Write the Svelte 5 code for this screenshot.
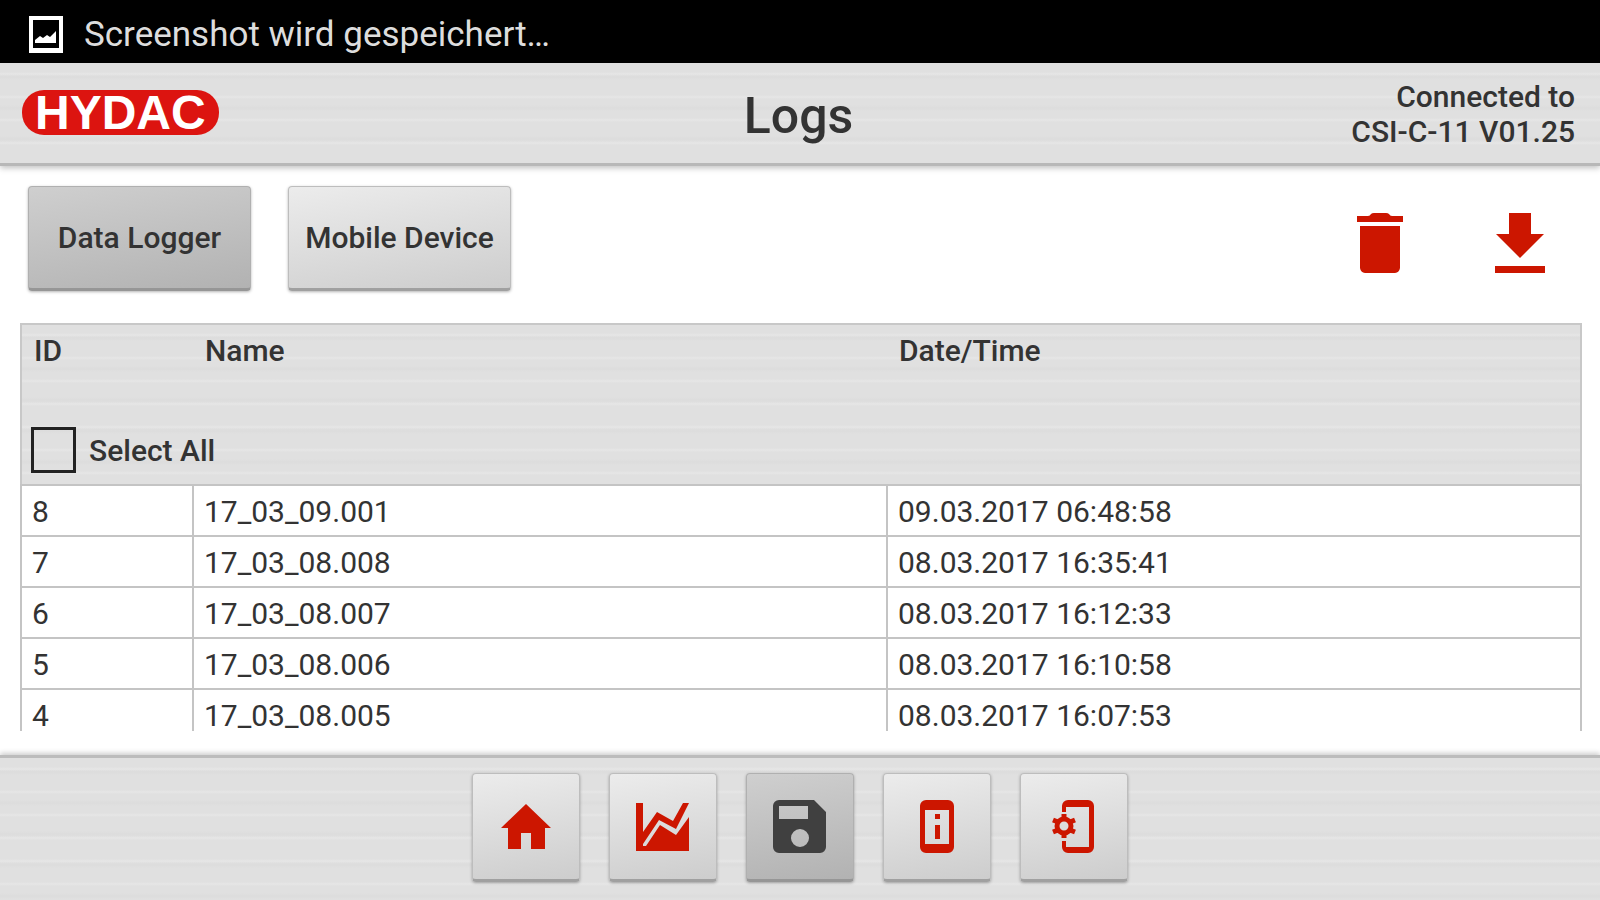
<script>
  let selectAll = $state(false);
  let source = $state('logger');
  let page = $state('logs');

  const logs = [
    { id: 8, name: '17_03_09.001', date: '09.03.2017 06:48:58' },
    { id: 7, name: '17_03_08.008', date: '08.03.2017 16:35:41' },
    { id: 6, name: '17_03_08.007', date: '08.03.2017 16:12:33' },
    { id: 5, name: '17_03_08.006', date: '08.03.2017 16:10:58' },
    { id: 4, name: '17_03_08.005', date: '08.03.2017 16:07:53' }
  ];

  const nav = [
    { id: 'home', label: 'Home', path: 'M32 9 57 33H51V54H37V38H27V54H14V33H7Z' },
    {
      id: 'chart',
      label: 'Chart',
      path: 'M5 8H12V37L26 17 42 26 52 8H58L45 34 28 25 12 49V51H15L29 30 45 40 58 22V56H5Z'
    },
    {
      id: 'logs',
      label: 'Logs',
      path: 'M11 5H46L58 17V52A6 6 0 0 1 52 58H11A6 6 0 0 1 5 52V11A6 6 0 0 1 11 5ZM11 11V24H40V11ZM32 34A9 9 0 1 0 32 52 9 9 0 1 0 32 34Z'
    },
    {
      id: 'info',
      label: 'Device info',
      path: 'M21 5H43A6 6 0 0 1 49 11V52A6 6 0 0 1 43 58H21A6 6 0 0 1 15 52V11A6 6 0 0 1 21 5ZM20 15V49H44V15ZM30 19H35V24H30ZM30 30H35V44H30Z'
    },
    {
      id: 'settings',
      label: 'Device settings',
      path: 'M20 17V11A6 6 0 0 1 26 5H46A6 6 0 0 1 52 11V52A6 6 0 0 1 46 58H26A6 6 0 0 1 20 52V46H24V52H47V12H24V17Z'
    }
  ];
</script>

<div class="app">
  <div class="status">
    <svg width="36" height="40" viewBox="0 0 36 40" aria-hidden="true">
      <path fill="#fff" fill-rule="evenodd" d="M1 1H35V38H1ZM5 5V33H31V5Z" />
      <path fill="#fff" d="M7 28V25L12 21 15 23 19 20 22 22 28 16V28Z" />
    </svg>
    <span>Screenshot wird gespeichert…</span>
  </div>

  <header class="brushed">
    <div class="logo">HYDAC</div>
    <h1>Logs</h1>
    <p class="connection">Connected to<br />CSI-C-11 V01.25</p>
  </header>

  <main>
    <div class="toolbar">
      <button class="btn tab" class:active={source === 'logger'} onclick={() => (source = 'logger')}>Data Logger</button>
      <button class="btn tab" class:active={source === 'mobile'} onclick={() => (source = 'mobile')}>Mobile Device</button>
      <div class="actions">
        <button class="action" aria-label="Delete">
          <svg width="64" height="64" viewBox="0 0 64 64">
            <path d="M9 5H20Q22 5 23 3 24 2 26 2H38Q40 2 41 3 42 5 44 5H55V11H9ZM12 15H52V57A6 6 0 0 1 47 62H17A6 6 0 0 1 12 57Z" />
          </svg>
        </button>
        <button class="action" aria-label="Download">
          <svg width="64" height="64" viewBox="0 0 64 64">
            <path d="M21 2H43V23H56L32 47 8 23H21ZM7 55H57V62H7Z" />
          </svg>
        </button>
      </div>
    </div>

    <div class="list">
      <table>
        <thead class="brushed">
          <tr>
            <th class="col-id">ID</th>
            <th class="col-name">Name</th>
            <th>Date/Time</th>
          </tr>
          <tr>
            <td class="select" colspan="3">
              <label><input type="checkbox" bind:checked={selectAll} />Select All</label>
            </td>
          </tr>
        </thead>
        <tbody>
          {#each logs as log}
            <tr>
              <td>{log.id}</td>
              <td>{log.name}</td>
              <td>{log.date}</td>
            </tr>
          {/each}
        </tbody>
      </table>
    </div>
  </main>

  <nav class="brushed">
    {#each nav as item}
      <button class="btn tile" class:active={page === item.id} aria-label={item.label} onclick={() => (page = item.id)}>
        <svg width="64" height="64" viewBox="0 0 64 64">
          <path fill-rule="evenodd" d={item.path} />
          {#if item.id === 'settings'}
            <circle class="gear" cx="22" cy="31" r="7" />
            <path class="gear" d="M22 24V19M22 38V43M16 27 11 25M16 35 11 37M28 27 33 25M28 35 33 37" />
          {/if}
        </svg>
      </button>
    {/each}
  </nav>
</div>

<style>
  :global(body) {
    margin: 0;
    background: #fff;
  }

  .app {
    display: flex;
    flex-direction: column;
    height: 100vh;
    overflow: hidden;
    color: #333;
    font-family: Roboto, sans-serif;
    font-size: 30px;
  }

  .brushed {
    background:
      repeating-linear-gradient(rgba(255, 255, 255, 0) 0 9px, rgba(255, 255, 255, 0.2) 11px, rgba(255, 255, 255, 0) 13px 23px),
      repeating-linear-gradient(rgba(0, 0, 0, 0) 0 11px, rgba(0, 0, 0, 0.015) 14px, rgba(0, 0, 0, 0) 17px 31px),
      #e0e0e0;
  }

  .status {
    flex: none;
    display: flex;
    align-items: center;
    gap: 20px;
    height: 63px;
    padding: 6px 28px 0;
    box-sizing: border-box;
    background: #000;
    color: #ddd;
    font-size: 35px;
  }

  header {
    flex: none;
    display: grid;
    grid-template-columns: 1fr auto 1fr;
    align-items: center;
    height: 103px;
    padding: 2px 25px 0 22px;
    border-bottom: 3px solid #b8b8b8;
    box-sizing: border-box;
    box-shadow: 0 2px 6px rgba(0, 0, 0, 0.25);
  }

  .logo {
    justify-self: start;
    padding: 0 13px;
    margin-bottom: 4px;
    border-radius: 22px;
    background: #dc1410;
    color: #fff;
    font: bold 48px/45px "Liberation Sans", sans-serif;
  }

  h1 {
    margin: 4px 0 0;
    font-size: 50px;
    font-weight: 500;
  }

  .connection {
    margin: 0;
    text-align: right;
    font-weight: 500;
    line-height: 35px;
  }

  main {
    flex: 1;
    min-height: 0;
    display: flex;
    flex-direction: column;
    padding: 20px 18px 24px 20px;
  }

  .toolbar {
    display: flex;
    align-items: center;
    gap: 37px;
    padding: 0 30px 32px 8px;
  }

  .btn {
    border: 1px solid #bdbdbd;
    border-bottom: 3px solid #a0a0a0;
    border-radius: 4px;
    padding: 0;
    background: linear-gradient(170deg, #ececec, #cdcdcd);
    color: #333;
    box-shadow: 0 1px 3px rgba(0, 0, 0, 0.3);
    font: 500 30px Roboto, sans-serif;
    cursor: pointer;
  }

  .btn.active {
    border-color: #b0b0b0;
    border-bottom-color: #969696;
    background: linear-gradient(170deg, #cfcfcf, #b2b2b2);
  }

  .tab {
    width: 223px;
    height: 105px;
  }

  .actions {
    display: flex;
    gap: 76px;
    margin-left: auto;
  }

  .action {
    padding: 8px 0 0;
    border: none;
    background: none;
    cursor: pointer;
  }

  svg {
    display: block;
    fill: #cc1600;
  }

  .list {
    flex: 1;
    min-height: 0;
    overflow: hidden;
  }

  table {
    width: 100%;
    border-collapse: collapse;
    table-layout: fixed;
    border: 2px solid #c8c8c8;
  }

  .col-id {
    width: 172px;
  }

  .col-name {
    width: 694px;
  }

  th {
    height: 78px;
    padding: 8px 12px 0;
    text-align: left;
    vertical-align: top;
    font-weight: 500;
    line-height: 35px;
    box-sizing: border-box;
  }

  .select {
    height: 83px;
    padding: 14px 9px 0;
    box-sizing: border-box;
    font-weight: 500;
  }

  label {
    display: flex;
    align-items: center;
    gap: 13px;
  }

  input {
    appearance: none;
    width: 45px;
    height: 46px;
    margin: 0;
    border: 3px solid #222;
  }

  input:checked {
    background: #cc1600;
  }

  tbody td {
    height: 51px;
    padding: 2px 10px 0;
    border: 2px solid #c4c4c4;
    box-sizing: border-box;
    line-height: 26px;
  }

  nav {
    flex: none;
    display: flex;
    justify-content: center;
    gap: 29px;
    padding: 15px 0 18px;
    border-top: 3px solid #bcbcbc;
    box-shadow: 0 -2px 5px rgba(0, 0, 0, 0.2);
  }

  .tile {
    display: grid;
    place-items: center;
    width: 108px;
    height: 109px;
  }

  .tile.active svg {
    fill: #404040;
  }

  .gear {
    fill: none;
    stroke: #cc1600;
    stroke-width: 5;
  }
</style>
